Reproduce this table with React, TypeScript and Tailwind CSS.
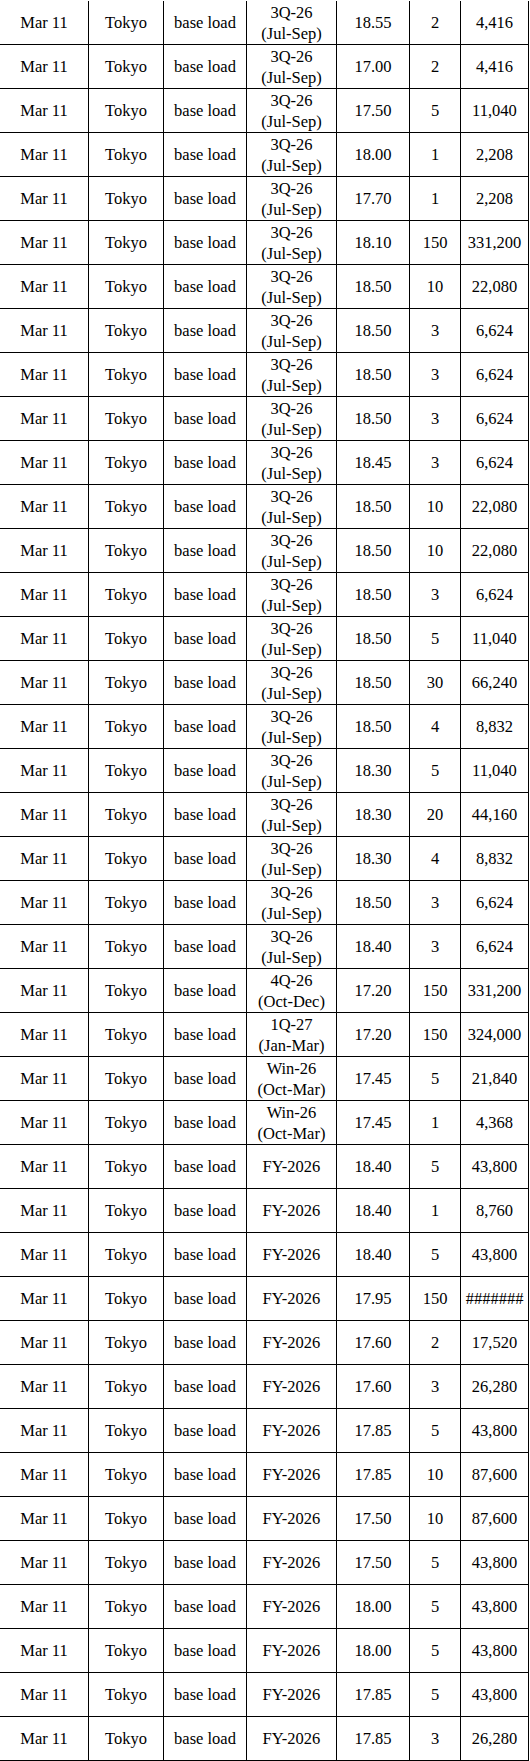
import React from "react";

type Row = [string, string, string, string];

const Q3 = "3Q-26|(Jul-Sep)";
const FY = "FY-2026";

const rows: Row[] = [
  [Q3, "18.55", "2", "4,416"],
  [Q3, "17.00", "2", "4,416"],
  [Q3, "17.50", "5", "11,040"],
  [Q3, "18.00", "1", "2,208"],
  [Q3, "17.70", "1", "2,208"],
  [Q3, "18.10", "150", "331,200"],
  [Q3, "18.50", "10", "22,080"],
  [Q3, "18.50", "3", "6,624"],
  [Q3, "18.50", "3", "6,624"],
  [Q3, "18.50", "3", "6,624"],
  [Q3, "18.45", "3", "6,624"],
  [Q3, "18.50", "10", "22,080"],
  [Q3, "18.50", "10", "22,080"],
  [Q3, "18.50", "3", "6,624"],
  [Q3, "18.50", "5", "11,040"],
  [Q3, "18.50", "30", "66,240"],
  [Q3, "18.50", "4", "8,832"],
  [Q3, "18.30", "5", "11,040"],
  [Q3, "18.30", "20", "44,160"],
  [Q3, "18.30", "4", "8,832"],
  [Q3, "18.50", "3", "6,624"],
  [Q3, "18.40", "3", "6,624"],
  ["4Q-26|(Oct-Dec)", "17.20", "150", "331,200"],
  ["1Q-27|(Jan-Mar)", "17.20", "150", "324,000"],
  ["Win-26|(Oct-Mar)", "17.45", "5", "21,840"],
  ["Win-26|(Oct-Mar)", "17.45", "1", "4,368"],
  [FY, "18.40", "5", "43,800"],
  [FY, "18.40", "1", "8,760"],
  [FY, "18.40", "5", "43,800"],
  [FY, "17.95", "150", "#######"],
  [FY, "17.60", "2", "17,520"],
  [FY, "17.60", "3", "26,280"],
  [FY, "17.85", "5", "43,800"],
  [FY, "17.85", "10", "87,600"],
  [FY, "17.50", "10", "87,600"],
  [FY, "17.50", "5", "43,800"],
  [FY, "18.00", "5", "43,800"],
  [FY, "18.00", "5", "43,800"],
  [FY, "17.85", "5", "43,800"],
  [FY, "17.85", "3", "26,280"],
];

const cell =
  "flex flex-col items-center justify-center text-center border-r border-black shrink-0";

export default function App() {
  return (
    <div className="w-[530px] bg-white pt-px text-black text-[16.5px] leading-[21px] font-['Liberation_Serif','Times_New_Roman',serif]">
      {rows.map((r, i) => {
        const period = r[0].split("|");
        return (
          <div key={i} className="flex h-[44px] w-[529px] border-b border-black">
            <div className={`${cell} w-[89px]`}>Mar 11</div>
            <div className={`${cell} w-[75px]`}>Tokyo</div>
            <div className={`${cell} w-[83px]`}>base load</div>
            <div className={`${cell} w-[90px]`}>
              {period.map((p, j) => (
                <span key={j}>{p}</span>
              ))}
            </div>
            <div className={`${cell} w-[73px]`}>{r[1]}</div>
            <div className={`${cell} w-[51px]`}>{r[2]}</div>
            <div className={`${cell} w-[68px]`}>{r[3]}</div>
          </div>
        );
      })}
    </div>
  );
}
